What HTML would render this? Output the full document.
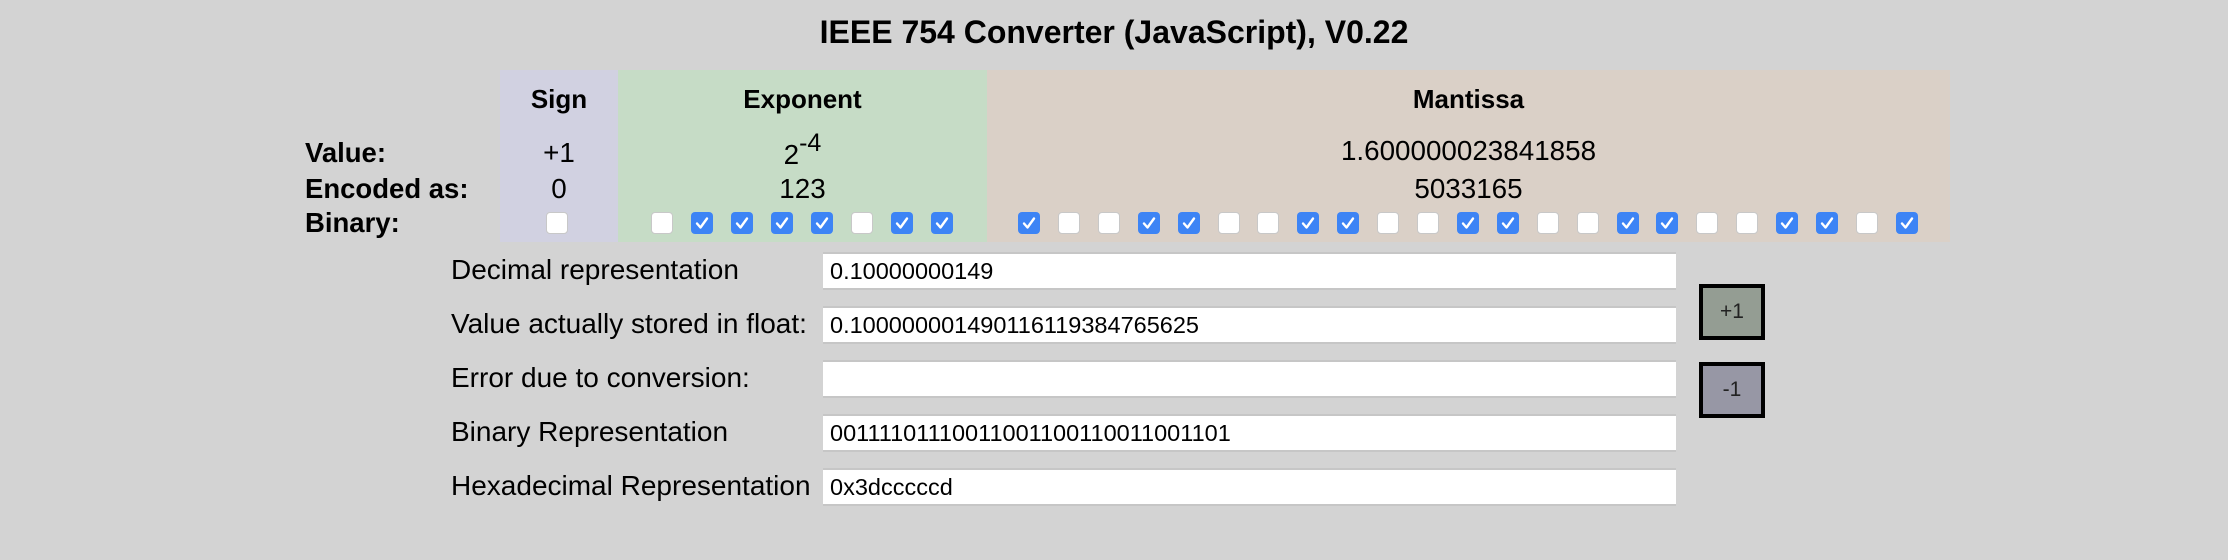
<!DOCTYPE html>
<html><head><meta charset="utf-8"><style>
body{margin:0;width:2228px;height:560px;background:#d3d3d3;font-family:"Liberation Sans",Arial,sans-serif;position:relative;overflow:hidden;color:#000}
.a{position:absolute;white-space:nowrap}
.title{left:0;width:2228px;top:14px;text-align:center;font-weight:bold;font-size:32px}
.col{position:absolute;top:70px;height:172px}
.c{text-align:center;font-size:27.8px}
.h{font-weight:bold;font-size:26px}
.lb{font-weight:bold;font-size:27.5px;left:305px}
.cb{position:absolute;top:212px;width:22px;height:22px;border-radius:4px;box-sizing:border-box}
.off{background:#fff;border:1px solid #c8c8c8}
.on{background:#3d84f5}
.on svg{position:absolute;left:3px;top:3px}
.fl{left:451px;font-size:28px}
.in{position:absolute;left:823px;width:853px;height:38px;background:#fff;border-top:2px solid #c6c6c6;border-bottom:2px solid #c6c6c6;box-sizing:border-box;font-size:23.5px;line-height:35px;padding-left:7px}
.btn{position:absolute;left:1699px;width:66px;height:56px;border:4px solid #000;box-sizing:border-box;text-align:center;line-height:48px;font-size:21px;color:#222}
</style></head><body>
<div class="a title">IEEE 754 Converter (JavaScript), V0.22</div>
<div class="col" style="left:500px;width:118px;background:#d1d1e1"></div>
<div class="col" style="left:618px;width:369px;background:#c6dcc6"></div>
<div class="col" style="left:987px;width:963px;background:#dad0c7"></div>

<div class="a c h" style="left:500px;width:118px;top:84px">Sign</div>
<div class="a c h" style="left:618px;width:369px;top:84px">Exponent</div>
<div class="a c h" style="left:987px;width:963px;top:84px">Mantissa</div>

<div class="a lb" style="top:137px">Value:</div>
<div class="a lb" style="top:173px">Encoded as:</div>
<div class="a lb" style="top:207px">Binary:</div>

<div class="a c" style="left:500px;width:118px;top:137px">+1</div>
<div class="a c" style="left:618px;width:369px;top:128px"><span style="position:relative;top:11px">2</span><span style="font-size:25px;position:relative;top:-2px">-4</span></div>
<div class="a c" style="left:987px;width:963px;top:135px">1.600000023841858</div>
<div class="a c" style="left:500px;width:118px;top:173px">0</div>
<div class="a c" style="left:618px;width:369px;top:173px">123</div>
<div class="a c" style="left:987px;width:963px;top:173px">5033165</div>

<div id="cbs"></div>
<script>
var html='';
function box(x,on){html+='<div class="cb '+(on?'on':'off')+'" style="left:'+x+'px">'+(on?'<svg width="16" height="16" viewBox="0 0 16 16"><path d="M3 8.5 L6.5 12.5 L13 3.5" fill="none" stroke="#fff" stroke-width="2.4" stroke-linecap="round" stroke-linejoin="round"/></svg>':'')+'</div>';}
box(546,0);
var e='01111011';for(var i=0;i<8;i++)box(651+i*40,e[i]=='1');
var m='10011001100110011001101';for(var i=0;i<23;i++)box(Math.round(1018+i*39.9),m[i]=='1');
document.getElementById('cbs').innerHTML=html;
</script>

<div class="a fl" style="top:254px">Decimal representation</div>
<div class="a fl" style="top:308px">Value actually stored in float:</div>
<div class="a fl" style="top:362px">Error due to conversion:</div>
<div class="a fl" style="top:416px">Binary Representation</div>
<div class="a fl" style="top:470px">Hexadecimal Representation</div>

<div class="in" style="top:252px">0.10000000149</div>
<div class="in" style="top:306px">0.100000001490116119384765625</div>
<div class="in" style="top:360px"></div>
<div class="in" style="top:414px">00111101110011001100110011001101</div>
<div class="in" style="top:468px">0x3dcccccd</div>

<div class="btn" style="top:284px;background:#949d93">+1</div>
<div class="btn" style="top:362px;background:#9797a5">-1</div>
</body></html>
